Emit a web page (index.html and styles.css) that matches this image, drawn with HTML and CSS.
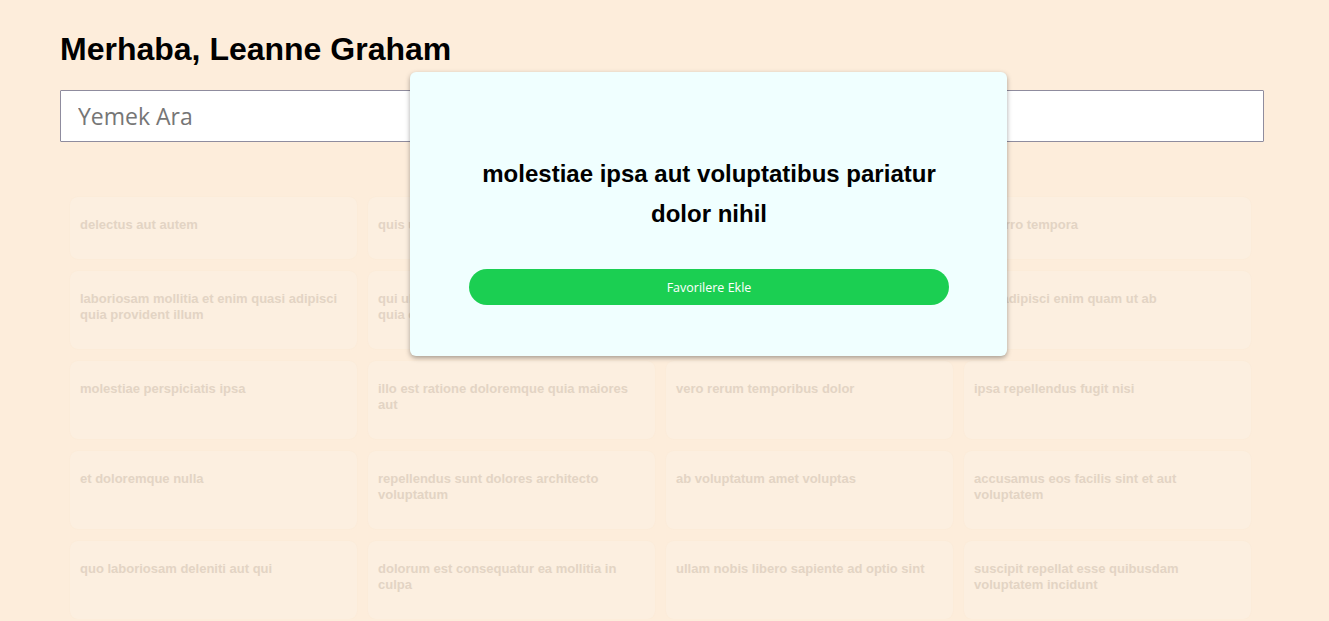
FILE: index.html
```html
<!DOCTYPE html>
<html lang="tr">
<head>
<meta charset="utf-8">
<title>Yemekler</title>
<link rel="stylesheet" href="styles.css">
</head>
<body>
<main class="page">
  <h1 class="greeting">Merhaba, Leanne Graham</h1>
  <input class="search" type="text" placeholder="Yemek Ara">
  <section class="grid">
    <div class="card">delectus aut autem</div>
    <div class="card">quis ut nam facilis et officia qui</div>
    <div class="card">fugiat veniam minus</div>
    <div class="card">et porro tempora</div>
    <div class="card">laboriosam mollitia et enim quasi adipisci quia provident illum</div>
    <div class="card">qui ullam ratione quibusdam voluptatem quia omnis</div>
    <div class="card">illo expedita consequatur quia in</div>
    <div class="card">quo adipisci enim quam ut ab</div>
    <div class="card">molestiae perspiciatis ipsa</div>
    <div class="card">illo est ratione doloremque quia maiores aut</div>
    <div class="card">vero rerum temporibus dolor</div>
    <div class="card">ipsa repellendus fugit nisi</div>
    <div class="card">et doloremque nulla</div>
    <div class="card">repellendus sunt dolores architecto voluptatum</div>
    <div class="card">ab voluptatum amet voluptas</div>
    <div class="card">accusamus eos facilis sint et aut voluptatem</div>
    <div class="card">quo laboriosam deleniti aut qui</div>
    <div class="card">dolorum est consequatur ea mollitia in culpa</div>
    <div class="card">ullam nobis libero sapiente ad optio sint</div>
    <div class="card">suscipit repellat esse quibusdam voluptatem incidunt</div>
  </section>
</main>
<div class="modal">
  <h2 class="modal-title">molestiae ipsa aut voluptatibus pariatur dolor nihil</h2>
  <button class="fav-btn" type="button">Favorilere Ekle</button>
</div>
</body>
</html>
```
FILE: styles.css
```css
html, body {
  margin: 0;
  padding: 0;
}
body {
  background: #fdeddb;
  font-family: "Liberation Sans", Arial, sans-serif;
  color: #000;
  overflow: hidden;
}
.page {
  padding: 31px 65px 0 60px;
  display: flex;
  flex-direction: column;
}
.greeting {
  margin: 0;
  font-size: 32px;
  line-height: 37px;
  font-weight: bold;
}
.search {
  margin-top: 22px;
  height: 52px;
  box-sizing: border-box;
  width: 1204px;
  border: 1px solid #8f8c9e;
  border-radius: 1px;
  background: #fff;
  padding: 0 17px;
  font-family: "Open Sans", sans-serif;
  font-size: 23px;
  color: #333;
  outline: none;
}
.search::placeholder {
  color: #767676;
}
.grid {
  margin: 55px 0 0 10px;
  display: grid;
  grid-template-columns: repeat(4, 287px);
  column-gap: 11px;
  row-gap: 12px;
  align-items: stretch;
}
.card {
  background: #fcefe0;
  border-radius: 8px;
  box-shadow: 0 0 2px rgba(150, 110, 60, 0.035);
  padding: 20px 10px 26px;
  font-size: 13px;
  line-height: 16px;
  font-weight: bold;
  color: #e3d4c4;
}
.modal {
  position: absolute;
  left: 410px;
  top: 72px;
  width: 597px;
  box-sizing: border-box;
  padding: 82px 58px 51px 59px;
  background: #f0ffff;
  border-radius: 6px;
  box-shadow: 0 2px 5px rgba(0, 0, 0, 0.35);
  display: flex;
  flex-direction: column;
  align-items: center;
}
.modal-title {
  margin: 0 0 35px;
  font-size: 24px;
  line-height: 40px;
  font-weight: bold;
  text-align: center;
}
.fav-btn {
  width: 480px;
  height: 36px;
  border: none;
  border-radius: 18px;
  background: #1bcf52;
  color: #fff;
  font-family: "Open Sans", sans-serif;
  font-size: 12.5px;
  cursor: pointer;
}
```
